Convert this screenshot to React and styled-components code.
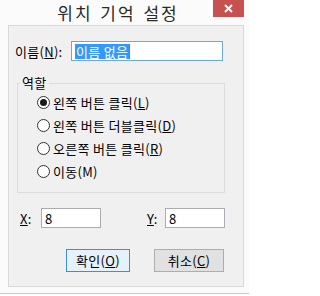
import styled, { createGlobalStyle } from 'styled-components';

const GlobalStyle = createGlobalStyle`
	html, body {
		margin: 0;
		padding: 0;
		background: #ffffff;
	}
	* {
		box-sizing: border-box;
	}
`;

const font = `'Noto Sans CJK KR', 'Noto Sans', sans-serif`;

const Window = styled.div`
	position: relative;
	width: 249px;
	height: 294px;
	padding: 0 5px 6px 8px;
	background: #fbfbfb;
	border-bottom: 1px solid #c9c9c9;
	font-family: ${font};
	color: #000;
	display: flex;
	flex-direction: column;
`;

const TitleBar = styled.div`
	height: 25px;
	display: flex;
	align-items: center;
	justify-content: center;
	padding-right: 16px;
	font-size: 17px;
	letter-spacing: 2px;
	word-spacing: 2px;
	color: #2a2a2a;
`;

const CloseButton = styled.div`
	position: absolute;
	top: 0;
	right: 5px;
	width: 31px;
	height: 17px;
	background: #c75050;
	display: flex;
	align-items: center;
	justify-content: center;
`;

const Client = styled.div`
	flex: 1;
	background: #f0f0f0;
	border: 1px solid #d9d9d9;
	padding: 15px 0 0 6px;
	font-size: 13px;
	letter-spacing: 0.3px;
	display: flex;
	flex-direction: column;
`;

const Row = styled.div`
	display: flex;
	align-items: center;
	height: ${(p) => p.h || 20}px;
	margin-top: ${(p) => p.mt || 0}px;
	padding-left: ${(p) => p.pl || 0}px;
	padding-right: ${(p) => p.pr || 0}px;
	justify-content: ${(p) => (p.end ? 'flex-end' : 'flex-start')};
	gap: ${(p) => p.gap || 0}px;
`;

const Label = styled.label`
	width: ${(p) => p.w}px;
	margin-left: ${(p) => p.ml || 0}px;
	flex-shrink: 0;
	white-space: nowrap;
`;

const Key = styled.span`
	text-decoration: underline;
	text-underline-offset: 1px;
`;

const TextBox = styled.div`
	width: ${(p) => p.w}px;
	height: 20px;
	background: #fff;
	border: 1px solid ${(p) => (p.focused ? '#6fa6dd' : '#abadb3')};
	display: flex;
	align-items: center;
	padding-left: 3px;
	white-space: nowrap;
`;

const Selection = styled.span`
	background: #3399ff;
	color: #fff;
	line-height: 15px;
	padding: 0 1px;
`;

const Caret = styled.span`
	width: 1px;
	height: 15px;
	background: #cc6600;
`;

const Group = styled.fieldset`
	margin: 14px 0 0 2px;
	width: 208px;
	padding: 0 0 9px 0;
	border: 1px solid #dcdcdc;
	min-width: 0;
`;

const Legend = styled.legend`
	margin-left: 2px;
	padding: 0 2px;
	line-height: 16px;
`;

const RadioRow = styled.div`
	height: 23px;
	padding-left: 19px;
	display: flex;
	align-items: center;
	gap: 3px;
	white-space: nowrap;
`;

const RadioCircle = styled.span`
	width: 13px;
	height: 13px;
	border-radius: 50%;
	border: 1px solid #333;
	background: #fff;
	display: flex;
	align-items: center;
	justify-content: center;
	flex-shrink: 0;

	&::after {
		content: '';
		width: 7px;
		height: 7px;
		border-radius: 50%;
		background: ${(p) => (p.checked ? '#1a1a1a' : 'transparent')};
	}
`;

const Button = styled.div`
	width: ${(p) => p.w}px;
	height: 23px;
	border: 1px solid ${(p) => (p.primary ? '#3c8fdc' : '#adadad')};
	background: ${(p) => (p.primary ? '#e5f1fb' : '#e1e1e1')};
	display: flex;
	align-items: center;
	justify-content: center;
`;

const radios = [
	{ text: '왼쪽 버튼 클릭', key: 'L', checked: true },
	{ text: '왼쪽 버튼 더블클릭', key: 'D' },
	{ text: '오른쪽 버튼 클릭', key: 'R' },
	{ text: '이동', key: 'M', plain: true },
];

export default function App() {
	return (
		<>
			<GlobalStyle />
			<Window>
				<TitleBar>위치 기억 설정</TitleBar>
				<CloseButton>
					<svg width='9' height='9' viewBox='0 0 9 9'>
						<path d='M1 1L8 8M8 1L1 8' stroke='#fff' strokeWidth='2' />
					</svg>
				</CloseButton>
				<Client>
					<Row>
						<Label w={56}>
							이름(<Key>N</Key>):
						</Label>
						<TextBox w={152} focused>
							<Selection>이름 없음</Selection>
							<Caret />
						</TextBox>
					</Row>
					<Group>
						<Legend>역할</Legend>
						{radios.map((r) => (
							<RadioRow key={r.key}>
								<RadioCircle checked={r.checked} />
								<span>
									{r.text}({r.plain ? r.key : <Key>{r.key}</Key>})
								</span>
							</RadioRow>
						))}
					</Group>
					<Row mt={15} pl={5}>
						<Label w={21}>
							<Key>X</Key>:
						</Label>
						<TextBox w={60}>8</TextBox>
						<Label w={18} ml={46}>
							<Key>Y</Key>:
						</Label>
						<TextBox w={60}>8</TextBox>
					</Row>
					<Row mt={21} h={23} end pr={19} gap={24}>
						<Button w={64} primary>
							확인(<Key>O</Key>)
						</Button>
						<Button w={70}>
							취소(<Key>C</Key>)
						</Button>
					</Row>
				</Client>
			</Window>
		</>
	);
}
